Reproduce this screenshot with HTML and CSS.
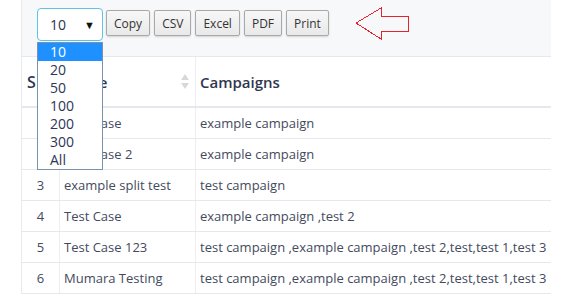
FILE: index.html
```html
<!DOCTYPE html>
<html lang="en">
<head>
    <meta charset="UTF-8">
    <meta name="viewport" content="width=device-width, initial-scale=1.0">
    <title>Test Cases</title>
    <link rel="stylesheet" href="styles.css">
</head>
<body>
    <div class="page">
        <!-- Toolbar with page length and export buttons -->
        <div class="toolbar">
            <div class="length-box">
                <div class="length-select">
                    <span>10</span>
                    <span class="caret">&#9660;</span>
                </div>
                <ul class="length-list">
                    <li class="selected">10</li>
                    <li>20</li>
                    <li>50</li>
                    <li>100</li>
                    <li>200</li>
                    <li>300</li>
                    <li>All</li>
                </ul>
            </div>
            <button class="btn">Copy</button>
            <button class="btn">CSV</button>
            <button class="btn">Excel</button>
            <button class="btn">PDF</button>
            <button class="btn">Print</button>
            <svg class="pointer" width="56" height="34" viewBox="0 0 56 34">
                <polygon points="1,16 26,1 26,9 53,9 53,24 26,24 26,32" fill="none" stroke="#e8222c" stroke-width="1" shape-rendering="crispEdges"/>
            </svg>
        </div>

        <!-- Test case table -->
        <table class="cases">
            <colgroup>
                <col class="col-no">
                <col class="col-name">
                <col class="col-camp">
            </colgroup>
            <thead>
                <tr>
                    <th class="first">S No</th>
                    <th class="sortable">Name<span class="sort"></span></th>
                    <th>Campaigns</th>
                </tr>
            </thead>
            <tbody>
                <tr><td class="num">1</td><td>Test Case</td><td>example campaign</td></tr>
                <tr><td class="num">2</td><td>Test Case 2</td><td>example campaign</td></tr>
                <tr><td class="num">3</td><td>example split test</td><td>test campaign</td></tr>
                <tr><td class="num">4</td><td>Test Case</td><td>example campaign ,test 2</td></tr>
                <tr><td class="num">5</td><td>Test Case 123</td><td>test campaign ,example campaign ,test 2,test,test 1,test 3</td></tr>
                <tr><td class="num">6</td><td>Mumara Testing</td><td>test campaign ,example campaign ,test 2,test,test 1,test 3</td></tr>
            </tbody>
        </table>
    </div>
</body>
</html>
```

FILE: styles.css
```css
/* Basic reset */
* {
    margin: 0;
    padding: 0;
    box-sizing: border-box;
}

body {
    background: #fff;
    font-family: "Open Sans", Arial, sans-serif;
    color: #3e4358;
}

.page {
    width: 551px;
    padding-left: 21px;
}

/* Toolbar */
.toolbar {
    height: 57px;
    display: flex;
    align-items: flex-start;
    padding: 8px 0 0 15px;
    background: #f7f8fa;
    border-left: 1px solid #e8eaef;
    border-bottom: 1px solid #e6e8ed;
}

.length-box {
    position: relative;
    margin-right: 3px;
}

.length-select {
    width: 66px;
    height: 33px;
    display: flex;
    align-items: center;
    justify-content: space-between;
    padding: 0 7px 0 12px;
    background: #fff;
    border: 1px solid #5ec4e4;
    border-radius: 4px;
    font-size: 14px;
    color: #2a3350;
}

.caret {
    font-size: 11px;
    color: #111;
}

.length-list {
    position: absolute;
    top: 34px;
    left: 0;
    width: 66px;
    list-style: none;
    background: #fff;
    border: 1px solid #7a93ad;
    z-index: 5;
}

.length-list li {
    height: 18px;
    line-height: 18px;
    padding-left: 12px;
    font-size: 14px;
    color: #2c3656;
}

.length-list li.selected {
    background: #1e90ff;
    color: #fff;
}

.btn {
    height: 26px;
    margin-top: 2px;
    margin-right: 4px;
    padding: 0 7px;
    font-family: "Open Sans", Arial, sans-serif;
    font-size: 12px;
    color: #333;
    background: linear-gradient(#f7f7f7, #e9e9e9);
    border: 1px solid #a9a9a9;
    border-radius: 2px;
    box-shadow: 0 1px 2px rgba(0, 0, 0, 0.15);
}

.pointer {
    margin-left: 22px;
    margin-top: -1px;
}

/* Table */
.cases {
    width: 530px;
    table-layout: fixed;
    border-collapse: collapse;
    border-left: 1px solid #e8eaef;
}

.col-no {
    width: 38px;
}

.col-name {
    width: 136px;
}

.cases th {
    height: 50px;
    padding: 0 4px;
    text-align: left;
    font-size: 15px;
    font-weight: 600;
    color: #2f3650;
    white-space: nowrap;
    overflow: hidden;
    border-right: 1px solid #eceef2;
    border-bottom: 2px solid #e6e8ed;
}

.cases th.first {
    padding-left: 5px;
    font-size: 16px;
}

.sortable {
    position: relative;
}

.sort {
    position: absolute;
    right: 6px;
    top: 17px;
    width: 8px;
    height: 15px;
}

.sort::before,
.sort::after {
    content: "";
    position: absolute;
    left: 0;
    border-left: 4px solid transparent;
    border-right: 4px solid transparent;
}

.sort::before {
    top: 0;
    border-bottom: 6px solid #d6d8dc;
}

.sort::after {
    bottom: 0;
    border-top: 6px solid #d6d8dc;
}

.cases td {
    height: 31px;
    padding: 0 4px;
    font-size: 13px;
    color: #444a5e;
    white-space: nowrap;
    border-right: 1px solid #eceef2;
    border-bottom: 1px solid #e6e8ed;
}

.cases td.num {
    text-align: center;
}

.cases th:last-child,
.cases td:last-child {
    border-right: none;
}
```
